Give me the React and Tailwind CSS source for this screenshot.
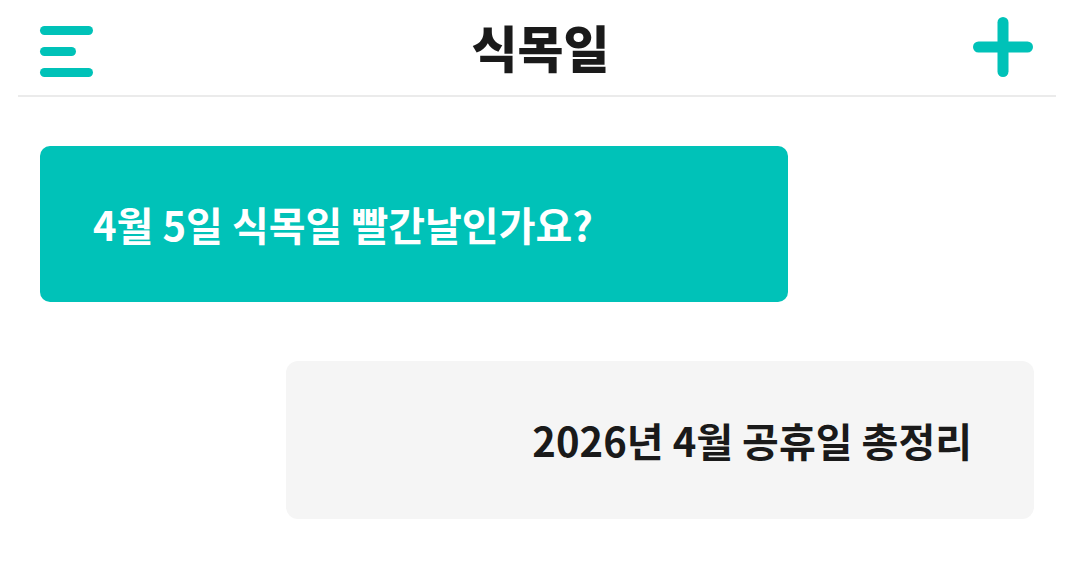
export default function App() {
  return (
    <div className="w-[1074px] h-[565px] bg-white overflow-hidden" style={{ fontFamily: '"Noto Sans CJK KR", "Noto Sans", sans-serif' }}>
      <header className="mx-[18px] h-[97px] border-b-2 border-[#ebebeb] flex items-center justify-between pl-[22px] pr-[23px]">
        <button className="w-[53px] h-[51px] flex flex-col justify-between mt-[8px]">
          <span className="block w-[53px] h-[9px] rounded-full bg-[#00c2b8]" />
          <span className="block w-[36px] h-[9px] rounded-full bg-[#00c2b8]" />
          <span className="block w-[53px] h-[9px] rounded-full bg-[#00c2b8]" />
        </button>
        <h1 className="ml-[15px] text-[50px] font-black text-[#1a1a1a] leading-none -mt-[4px]">식목일</h1>
        <svg width="60" height="60" viewBox="0 0 60 60" className="-mt-[1px]">
          <line x1="30" y1="5.5" x2="30" y2="54.5" stroke="#00c2b8" strokeWidth="11" strokeLinecap="round" />
          <line x1="5.5" y1="30" x2="54.5" y2="30" stroke="#00c2b8" strokeWidth="11" strokeLinecap="round" />
        </svg>
      </header>
      <main className="px-[40px] pt-[49px] flex flex-col gap-[59px]">
        <div className="self-start w-[748px] h-[156px] rounded-[10px] bg-[#00c2b8] flex items-center pl-[53px]">
          <p className="text-white font-bold text-[40px] leading-none">4월 5일 식목일 빨간날인가요?</p>
        </div>
        <div className="self-end w-[748px] h-[158px] rounded-[12px] bg-[#f5f5f5] flex items-center justify-end pr-[62px]">
          <p className="text-[#1a1a1a] font-bold text-[40px] leading-none">2026년 4월 공휴일 총정리</p>
        </div>
      </main>
    </div>
  );
}
